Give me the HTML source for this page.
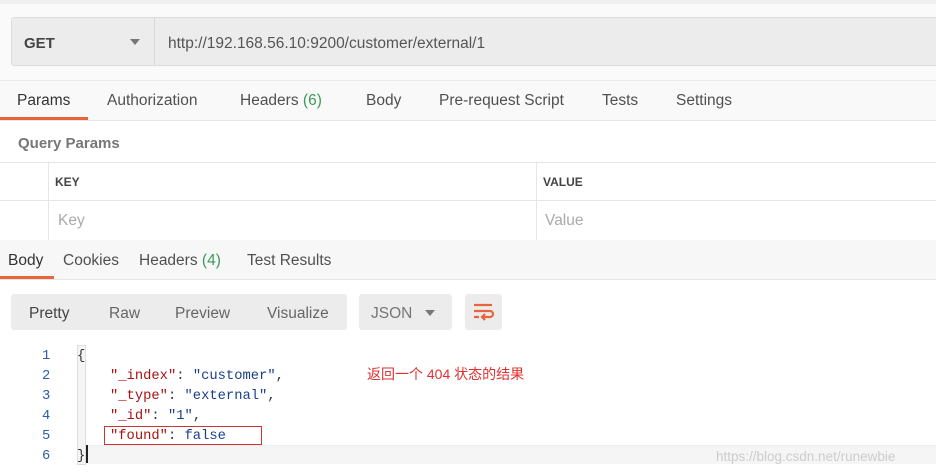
<!DOCTYPE html><html><head><style>
body{margin:0;width:936px;height:475px;overflow:hidden;background:#fff;font-family:"Liberation Sans","Noto Sans CJK SC",sans-serif;position:relative;color:#333}
.a{position:absolute;white-space:nowrap}
.t{font-size:15.5px;color:#505050}
.m{font-family:"Liberation Mono",monospace;font-size:13.8px}
</style></head><body>
<div class="a" style="left:0;top:0;width:936px;height:80px;background:#fafafa;border-top:4px solid #f0f0f0;box-sizing:border-box"></div>
<div class="a" style="left:11px;top:17px;width:930px;height:49px;background:#ececec;border:1px solid #ddd;border-radius:3px;box-sizing:border-box"></div>
<div class="a" style="left:154px;top:18px;width:1px;height:47px;background:#d8d8d8"></div>
<div class="a" style="left:24px;top:35px;font-size:15px;font-weight:bold;color:#444">GET</div>
<div class="a" style="left:130px;top:39px;width:0;height:0;border-left:5px solid transparent;border-right:5px solid transparent;border-top:6px solid #777"></div>
<div class="a t" style="left:168px;top:35px;color:#555">http://192.168.56.10:9200/customer/external/1</div>
<div class="a" style="left:0;top:80px;width:936px;height:41px;background:#f9f9f9;border-top:1px solid #ececec;border-bottom:1px solid #e6e6e6;box-sizing:border-box"></div>
<div class="a t" style="left:17px;top:92px;color:#333">Params</div>
<div class="a" style="left:0;top:117px;width:88px;height:3px;background:#e8643c"></div>
<div class="a t" style="left:107px;top:92px">Authorization</div>
<div class="a t" style="left:240px;top:92px">Headers <span style="color:#3a9a5a">(6)</span></div>
<div class="a t" style="left:366px;top:92px">Body</div>
<div class="a t" style="left:439px;top:92px">Pre-request Script</div>
<div class="a t" style="left:602px;top:92px">Tests</div>
<div class="a t" style="left:676px;top:92px">Settings</div>
<div class="a" style="left:18px;top:135px;font-size:15px;font-weight:bold;color:#777">Query Params</div>
<div class="a" style="left:0;top:162px;width:936px;height:78px;border-top:1px solid #e6e6e6;box-sizing:border-box"></div>
<div class="a" style="left:0;top:200px;width:936px;height:1px;background:#e6e6e6"></div>
<div class="a" style="left:48px;top:162px;width:1px;height:78px;background:#e6e6e6"></div>
<div class="a" style="left:536px;top:162px;width:1px;height:78px;background:#e6e6e6"></div>
<div class="a" style="left:55px;top:175px;font-size:12px;font-weight:bold;color:#444">KEY</div>
<div class="a" style="left:543px;top:175px;font-size:12px;font-weight:bold;color:#444">VALUE</div>
<div class="a t" style="left:58px;top:212px;color:#aaa">Key</div>
<div class="a t" style="left:545px;top:212px;color:#aaa">Value</div>
<div class="a" style="left:0;top:240px;width:936px;height:40px;background:#f7f7f7;border-bottom:1px solid #e6e6e6;box-sizing:border-box"></div>
<div class="a t" style="left:8px;top:252px;color:#333">Body</div>
<div class="a" style="left:0;top:276px;width:54px;height:3px;background:#e8643c"></div>
<div class="a t" style="left:63px;top:252px">Cookies</div>
<div class="a t" style="left:139px;top:252px">Headers <span style="color:#3a9a5a">(4)</span></div>
<div class="a t" style="left:247px;top:252px">Test Results</div>
<div class="a" style="left:11px;top:294px;width:336px;height:36px;background:#ececec;border-radius:3px"></div>
<div class="a t" style="left:29px;top:305px;color:#444">Pretty</div>
<div class="a t" style="left:109px;top:305px;color:#666">Raw</div>
<div class="a t" style="left:175px;top:305px;color:#666">Preview</div>
<div class="a t" style="left:267px;top:305px;color:#666">Visualize</div>
<div class="a" style="left:359px;top:294px;width:93px;height:36px;background:#ececec;border-radius:3px"></div>
<div class="a t" style="left:371px;top:305px;color:#777">JSON</div>
<div class="a" style="left:425px;top:310px;border-left:5px solid transparent;border-right:5px solid transparent;border-top:6px solid #777"></div>
<div class="a" style="left:465px;top:294px;width:37px;height:36px;background:#ececec;border-radius:3px"></div>
<svg class="a" style="left:472px;top:301px" width="23" height="22"><g stroke="#e8643c" stroke-width="2.2" fill="none"><path d="M2 4H20M2 10H18a3 3 0 0 1 0 6H11M2 16H7"/><path d="M13 13l-3 3 3 3"/></g></svg>
<div class="a" style="left:77px;top:345px;width:9px;height:120px;background:#f5f5f5;border:1px solid #ddd;box-sizing:border-box"></div>
<div class="a" style="left:86px;top:445px;width:850px;height:18px;background:#f5f5f5;border-top:1px solid #eee"></div>
<div class="a" style="left:86px;top:445px;width:2px;height:18px;background:#222"></div>
<div class="a m" style="left:42px;top:347px;line-height:20px;color:#2a5db0;text-align:right">1<br>2<br>3<br>4<br>5<br>6</div>
<div class="a m" style="left:77px;top:347px;line-height:20px;color:#333">{<br><span style="padding-left:33px;color:#a11">"_index"</span>: <span style="color:#1a3e8a">"customer"</span>,<br><span style="padding-left:33px;color:#a11">"_type"</span>: <span style="color:#1a3e8a">"external"</span>,<br><span style="padding-left:33px;color:#a11">"_id"</span>: <span style="color:#1a3e8a">"1"</span>,<br><span style="padding-left:33px;color:#a11">"found"</span>: <span style="color:#1a3e8a">false</span><br>}</div>
<div class="a" style="left:104px;top:426px;width:158px;height:19px;border:1px solid #c33;box-sizing:border-box"></div>
<div class="a" style="left:367px;top:364px;font-size:14px;color:#e03030">返回一个 404 状态的结果</div>
<div class="a" style="left:716px;top:449px;font-size:13.5px;color:#ccc">https://blog.csdn.net/runewbie</div>
</body></html>
